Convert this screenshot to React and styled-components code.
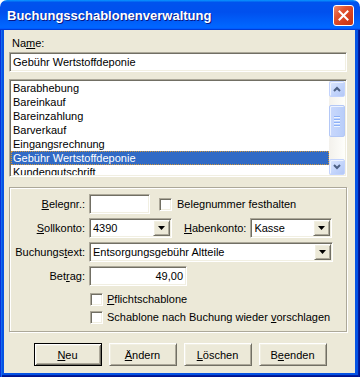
import React from 'react';
import styled, { createGlobalStyle, css } from 'styled-components';

const GlobalStyle = createGlobalStyle`
  html, body { margin: 0; padding: 0; background: #fff; }
  body { font-family: "Liberation Sans", Arial, sans-serif; font-size: 11px; color: #000; }
  * { box-sizing: border-box; }
  u { text-decoration: underline; text-underline-offset: 1px; }
`;

const sunken = css`
  border: 1px solid;
  border-color: #aca899 #ffffff #ffffff #aca899;
  box-shadow: inset 1px 1px #716f64, inset -1px -1px #f1efe2;
  background: #fff;
`;

const raised = css`
  border: 1px solid;
  border-color: #ffffff #716f64 #716f64 #ffffff;
  box-shadow: inset 1px 1px #f1efe2, inset -1px -1px #aca899;
  background: #ece9d8;
`;

const Window = styled.div`
  width: 360px;
  height: 377px;
  display: flex;
  flex-direction: column;
`;

const TitleBar = styled.div`
  height: 30px;
  flex: none;
  display: flex;
  align-items: center;
  justify-content: space-between;
  padding: 0 6px 0 7px;
  border-radius: 7px 7px 0 0;
  background: linear-gradient(180deg, #0997ff, #0053ee 8%, #0050ee 40%, #0066ff 88%, #0066ff 93%, #005bff 95%, #003dd7 96%, #003dd7);
`;

const TitleText = styled.span`
  color: #fff;
  font-weight: bold;
  font-size: 13px;
  letter-spacing: 0;
  text-shadow: 1px 1px #0a1883;
  padding-top: 1px;
`;

const CloseButton = styled.div`
  width: 21px;
  height: 21px;
  border: 1px solid #fff;
  border-radius: 3px;
  background: radial-gradient(circle at 90% 90%, #cc4600 0%, #dc6527 55%, #cd7546 70%, #ffccb2 90%, #fff 100%);
  background: linear-gradient(135deg, #f08a6c 0%, #e2532f 35%, #d43d1c 70%, #c33513 100%);
  display: flex;
  align-items: center;
  justify-content: center;
  margin-top: 1px;
`;

const Frame = styled.div`
  flex: 1;
  display: flex;
  padding: 0 5px 4px 4px;
  background: #0553e4;
  box-shadow: inset 1px 0 #0831d9, inset 2px 0 #166aee, inset -1px 0 #00138c, inset -2px 0 #001ea0, inset 0 -1px #00138c, inset 0 -2px #001ea0;
`;

const Client = styled.div`
  flex: 1;
  background: #ece9d8;
  display: flex;
  flex-direction: column;
  padding: 7px 0 0 5px;
`;

const FieldLabel = styled.label`
  line-height: 13px;
  height: 13px;
  padding-left: 3px;
  margin-bottom: 2px;
`;

const TextBox = styled.div`
  ${sunken};
  width: ${p => p.$w}px;
  height: 20px;
  line-height: 18px;
  padding: 0 3px;
  text-align: ${p => (p.$right ? 'right' : 'left')};
  white-space: nowrap;
  overflow: hidden;
`;

const ListBox = styled.div`
  ${sunken};
  width: 338px;
  height: 98px;
  margin-top: 7px;
  display: flex;
  padding: 1px;
  overflow: hidden;
`;

const ListItems = styled.div`
  flex: 1;
  display: flex;
  flex-direction: column;
  overflow: hidden;
`;

const ListItem = styled.div`
  height: 14px;
  flex: none;
  line-height: 12px;
  padding-left: 1px;
  white-space: nowrap;
  border: 1px ${p => (p.$selected ? 'dotted #ce953a' : 'solid transparent')};
  background: ${p => (p.$selected ? '#316ac5' : 'transparent')};
  color: ${p => (p.$selected ? '#fff' : '#000')};
`;

const ScrollTrack = styled.div`
  width: 16px;
  flex: none;
  display: flex;
  flex-direction: column;
  background: linear-gradient(90deg, #f3f1ec, #fefefb);
`;

const ScrollButton = styled.div`
  width: 16px;
  height: 16px;
  flex: none;
  border: 1px solid #c3d3fd;
  border-radius: 2px;
  background: linear-gradient(135deg, #dbe6fd 0%, #c1d3fb 60%, #b4c8f6 100%);
  box-shadow: inset 1px 1px #eef3fe;
  display: flex;
  align-items: center;
  justify-content: center;
  margin-top: ${p => p.$end ? 'auto' : '0'};
`;

const Thumb = styled.div`
  width: 16px;
  height: 32px;
  margin-top: 8px;
  border: 1px solid #b4c8f6;
  border-radius: 2px;
  background: linear-gradient(90deg, #c9d8fc 0%, #c1d3fb 50%, #b8cdf9 100%);
  box-shadow: inset 1px 1px #eef3fe;
  display: flex;
  flex-direction: column;
  align-items: center;
  justify-content: center;
  gap: 1px;
`;

const Grip = styled.div`
  width: 6px;
  height: 1px;
  background: #8cb0f8;
  box-shadow: 0 1px #eef4fe;
  margin-bottom: 1px;
`;

const Group = styled.div`
  width: 338px;
  margin-top: 10px;
  border: 1px solid #aca899;
  box-shadow: inset 1px 1px #fff, 1px 1px #fff;
  padding: 6px 0 7px 0;
  display: flex;
  flex-direction: column;
  gap: 4px;
`;

const Row = styled.div`
  height: 20px;
  display: flex;
  align-items: center;
`;

const RowLabel = styled.span`
  width: 75px;
  flex: none;
  text-align: right;
  margin-right: 4px;
  white-space: nowrap;
`;

const InlineLabel = styled.span`
  margin: 0 4px 0 ${p => p.$ml || 0}px;
  white-space: nowrap;
`;

const Combo = styled.div`
  ${sunken};
  width: ${p => p.$w}px;
  height: 20px;
  display: flex;
  align-items: stretch;
  padding: 1px;
`;

const ComboText = styled.span`
  flex: 1;
  line-height: 16px;
  padding-left: 2px;
  white-space: nowrap;
  overflow: hidden;
`;

const DropButton = styled.div`
  ${raised};
  width: 17px;
  flex: none;
  display: flex;
  align-items: center;
  justify-content: center;
`;

const CheckBox = styled.span`
  ${sunken};
  width: 13px;
  height: 13px;
  flex: none;
  display: inline-block;
  margin: 0 ${p => p.$mr || 4}px 0 ${p => p.$ml || 0}px;
`;

const CheckRow = styled.div`
  height: 13px;
  display: flex;
  align-items: center;
  padding-left: 80px;
  margin-top: ${p => p.$mt}px;
  line-height: 13px;
`;

const ButtonBar = styled.div`
  display: flex;
  justify-content: center;
  gap: 7px;
  margin-top: 11px;
  padding-right: 4px;
`;

const PushButton = styled.div`
  ${raised};
  width: 68px;
  height: 23px;
  display: flex;
  align-items: center;
  justify-content: center;
  ${p => p.$default && css`
    border: 1px solid #000;
    box-shadow: inset 1px 1px #fff, inset -1px -1px #716f64, inset 2px 2px #f1efe2, inset -2px -2px #aca899;
  `}
`;

const Triangle = () => (
  <svg width="7" height="4" viewBox="0 0 7 4"><polygon points="0,0 7,0 3.5,4" fill="#000" /></svg>
);

const Chevron = ({ up }) => (
  <svg width="8" height="6" viewBox="0 0 8 6">
    <polyline points={up ? '1,5 4,2 7,5' : '1,1 4,4 7,1'} fill="none" stroke="#4d6185" strokeWidth="2" />
  </svg>
);

const items = ['Barabhebung', 'Bareinkauf', 'Bareinzahlung', 'Barverkauf', 'Eingangsrechnung', 'Gebühr Wertstoffdeponie', 'Kundengutschrift'];

export default function App() {
  return (
    <>
      <GlobalStyle />
      <Window>
        <TitleBar>
          <TitleText>Buchungsschablonenverwaltung</TitleText>
          <CloseButton>
            <svg width="11" height="11" viewBox="0 0 11 11">
              <path d="M1.5 1.5 L9.5 9.5 M9.5 1.5 L1.5 9.5" stroke="#fff" strokeWidth="2" strokeLinecap="square" />
            </svg>
          </CloseButton>
        </TitleBar>
        <Frame>
          <Client>
            <FieldLabel>Na<u>m</u>e:</FieldLabel>
            <TextBox $w={338}>Gebühr Wertstoffdeponie</TextBox>
            <ListBox>
              <ListItems>
                {items.map(it => (
                  <ListItem key={it} $selected={it === 'Gebühr Wertstoffdeponie'}>{it}</ListItem>
                ))}
              </ListItems>
              <ScrollTrack>
                <ScrollButton><Chevron up /></ScrollButton>
                <Thumb><Grip /><Grip /><Grip /><Grip /></Thumb>
                <ScrollButton $end><Chevron /></ScrollButton>
              </ScrollTrack>
            </ListBox>
            <Group>
              <Row>
                <RowLabel><u>B</u>elegnr.:</RowLabel>
                <TextBox $w={61} />
                <CheckBox $ml={9} $mr={5} />
                <span>Belegnummer festhalten</span>
              </Row>
              <Row>
                <RowLabel><u>S</u>ollkonto:</RowLabel>
                <Combo $w={83}><ComboText>4390</ComboText><DropButton><Triangle /></DropButton></Combo>
                <InlineLabel $ml={12}><u>H</u>abenkonto:</InlineLabel>
                <Combo $w={82}><ComboText>Kasse</ComboText><DropButton><Triangle /></DropButton></Combo>
              </Row>
              <Row>
                <RowLabel>Buchungs<u>t</u>ext:</RowLabel>
                <Combo $w={244}><ComboText>Entsorgungsgebühr Altteile</ComboText><DropButton><Triangle /></DropButton></Combo>
              </Row>
              <Row>
                <RowLabel>Bet<u>r</u>ag:</RowLabel>
                <TextBox $w={98} $right>49,00</TextBox>
              </Row>
              <CheckRow $mt={3}>
                <CheckBox />
                <span><u>P</u>flichtschablone</span>
              </CheckRow>
              <CheckRow $mt={1}>
                <CheckBox />
                <span>Schablone nach Buchung wieder <u>v</u>orschlagen</span>
              </CheckRow>
            </Group>
            <ButtonBar>
              <PushButton $default><span><u>N</u>eu</span></PushButton>
              <PushButton><span><u>Ä</u>ndern</span></PushButton>
              <PushButton><span><u>L</u>öschen</span></PushButton>
              <PushButton><span>B<u>e</u>enden</span></PushButton>
            </ButtonBar>
          </Client>
        </Frame>
      </Window>
    </>
  );
}
